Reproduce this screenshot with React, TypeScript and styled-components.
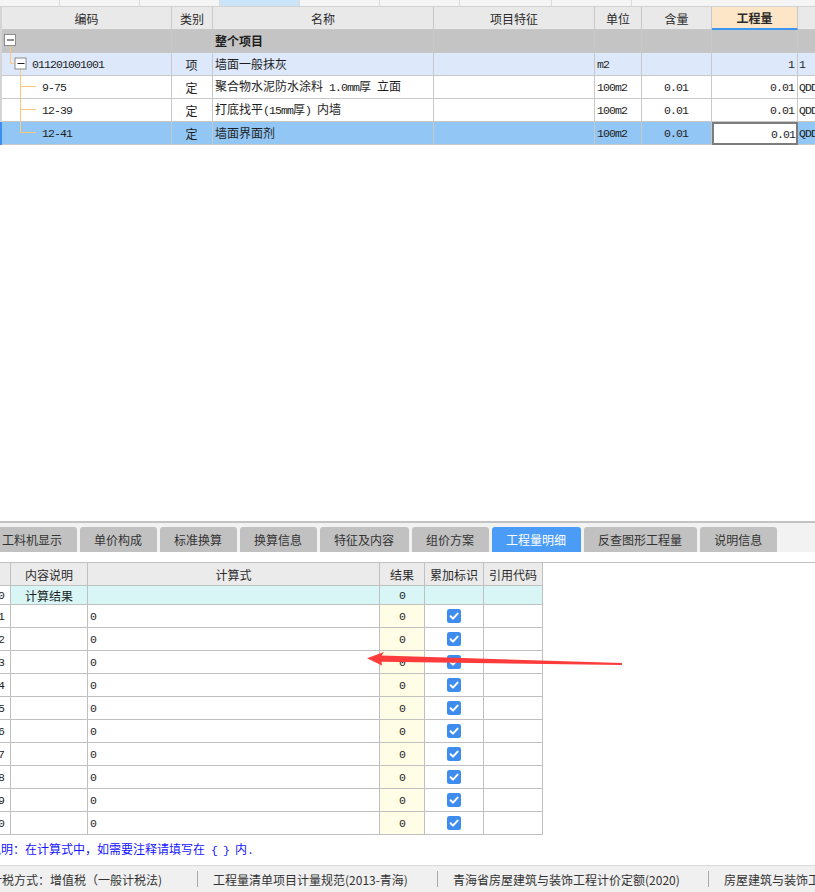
import React from "react";
import styled, { createGlobalStyle } from "styled-components";

const GlobalStyle = createGlobalStyle`
  html, body {
    margin: 0;
    padding: 0;
    background: #ffffff;
  }
  body {
    font-family: "Noto Sans CJK SC", "Microsoft YaHei", sans-serif;
    font-size: 12px;
    color: #222;
  }
`;

const ASCII = /([\x20-\x7e]+)/;

// SimSun-like half-width runs: monospace ascii inside CJK text
function Mixed({ text }: { text: string }) {
  return (
    <Text>
      {text.split(ASCII).map((part, i) =>
        i % 2 === 1 ? <Ascii key={i}>{part}</Ascii> : part ? <span key={i}>{part}</span> : null
      )}
    </Text>
  );
}

const TOP_COLS = [170, 41, 221, 161, 47, 70, 86, 60];
const LOW_COLS = [11, 77, 292, 45, 59, 59];

type Tone = "head" | "group" | "item" | "plain" | "selected";

const toneBg: Record<Tone, string> = {
  head: "#e9e9e9",
  group: "#c4c4c4",
  item: "#dde9fb",
  plain: "#ffffff",
  selected: "#92c6f4",
};

type TopRow = {
  level: 0 | 1 | 2;
  last?: boolean;
  code: string;
  kind: string;
  name: string;
  feature: string;
  unit: string;
  ratio: string;
  amount: string;
  extra: string;
  tone: Tone;
};

const topRows: TopRow[] = [
  { level: 0, code: "", kind: "", name: "整个项目", feature: "", unit: "", ratio: "", amount: "", extra: "", tone: "group" },
  { level: 1, code: "011201001001", kind: "项", name: "墙面一般抹灰", feature: "", unit: "m2", ratio: "", amount: "1", extra: "1", tone: "item" },
  { level: 2, code: "9-75", kind: "定", name: "聚合物水泥防水涂料 1.0mm厚 立面", feature: "", unit: "100m2", ratio: "0.01", amount: "0.01", extra: "QDDE", tone: "plain" },
  { level: 2, code: "12-39", kind: "定", name: "打底找平(15mm厚) 内墙", feature: "", unit: "100m2", ratio: "0.01", amount: "0.01", extra: "QDDE", tone: "plain" },
  { level: 2, last: true, code: "12-41", kind: "定", name: "墙面界面剂", feature: "", unit: "100m2", ratio: "0.01", amount: "0.01", extra: "QDDE", tone: "selected" },
];

const tabs = ["工料机显示", "单价构成", "标准换算", "换算信息", "特征及内容", "组价方案", "工程量明细", "反查图形工程量", "说明信息"];

const stripCells = [60, 80, 80, 80, 80, 80, 92, 80, 200];

const ORANGE = "#ffc878";

function MinusBox({ x, y }: { x: number; y: number }) {
  return (
    <>
      <rect x={x + 0.5} y={y + 0.5} width={11} height={11} fill="#fff" stroke="#8c8c8c" />
      <line x1={x + 3} y1={y + 6} x2={x + 10} y2={y + 6} stroke="#222" strokeWidth={1} />
    </>
  );
}

function TreeLines({ level, last }: { level: 0 | 1 | 2; last?: boolean }) {
  if (level === 0) {
    return (
      <TreeSvg width={16} height={22} viewBox="0 0 16 22">
        <line x1={8.5} y1={16} x2={8.5} y2={22} stroke={ORANGE} />
        <MinusBox x={2} y={4} />
      </TreeSvg>
    );
  }
  if (level === 1) {
    return (
      <TreeSvg width={30} height={22} viewBox="0 0 30 22">
        <line x1={8.5} y1={0} x2={8.5} y2={10.5} stroke={ORANGE} />
        <line x1={8.5} y1={10.5} x2={12.5} y2={10.5} stroke={ORANGE} />
        <line x1={18.5} y1={16} x2={18.5} y2={22} stroke={ORANGE} />
        <MinusBox x={12.5} y={4.5} />
      </TreeSvg>
    );
  }
  return (
    <TreeSvg width={40} height={22} viewBox="0 0 40 22">
      <line x1={18.5} y1={0} x2={18.5} y2={last ? 10.5 : 22} stroke={ORANGE} />
      <line x1={18.5} y1={10.5} x2={34} y2={10.5} stroke={ORANGE} />
    </TreeSvg>
  );
}

function CheckBox() {
  return (
    <svg width={14} height={14} viewBox="0 0 14 14">
      <rect x={0} y={0} width={14} height={14} rx={2.5} fill="#3d8cee" />
      <path d="M3.6 7.3 L6 9.6 L10.6 4.6" fill="none" stroke="#fff" strokeWidth={2} strokeLinecap="round" strokeLinejoin="round" />
    </svg>
  );
}

export default function App() {
  return (
    <Page>
      <GlobalStyle />

      <TopStrip>
        {stripCells.map((w, i) => (
          <StripCell key={i} $w={w} $active={i === 3} />
        ))}
      </TopStrip>

      <Grid>
        <Row $tone="head">
          <HeadCell $w={TOP_COLS[0]}>编码</HeadCell>
          <HeadCell $w={TOP_COLS[1]}>类别</HeadCell>
          <HeadCell $w={TOP_COLS[2]}>名称</HeadCell>
          <HeadCell $w={TOP_COLS[3]}>项目特征</HeadCell>
          <HeadCell $w={TOP_COLS[4]}>单位</HeadCell>
          <HeadCell $w={TOP_COLS[5]}>含量</HeadCell>
          <HeadCell $w={TOP_COLS[6]} $hot>工程量</HeadCell>
          <HeadCell $w={TOP_COLS[7]} />
        </Row>
        {topRows.map((r, i) => (
          <Row key={i} $tone={r.tone}>
            <Cell $w={TOP_COLS[0]} $pad={0}>
              <TreeLines level={r.level} last={r.last} />
              <Mixed text={r.code} />
            </Cell>
            <Cell $w={TOP_COLS[1]} $align="center">{r.kind}</Cell>
            <Cell $w={TOP_COLS[2]} $bold={r.tone === "group"}>
              <Mixed text={r.name} />
            </Cell>
            <Cell $w={TOP_COLS[3]}>{r.feature}</Cell>
            <Cell $w={TOP_COLS[4]}>
              <Mixed text={r.unit} />
            </Cell>
            <Cell $w={TOP_COLS[5]} $align="center">
              <Mixed text={r.ratio} />
            </Cell>
            <Cell $w={TOP_COLS[6]} $align="flex-end" $focus={r.tone === "selected"}>
              <Mixed text={r.amount} />
            </Cell>
            <Cell $w={TOP_COLS[7]} $pad={1}>
              <Mixed text={r.extra} />
            </Cell>
          </Row>
        ))}
      </Grid>

      <Spacer />

      <Bottom>
        <TabBar>
          {tabs.map((t) => (
            <Tab key={t} $active={t === "工程量明细"}>
              {t}
            </Tab>
          ))}
        </TabBar>

        <LowGrid>
          <LowRow>
            <LowHead $w={LOW_COLS[0]} />
            <LowHead $w={LOW_COLS[1]}>内容说明</LowHead>
            <LowHead $w={LOW_COLS[2]}>计算式</LowHead>
            <LowHead $w={LOW_COLS[3]}>结果</LowHead>
            <LowHead $w={LOW_COLS[4]}>累加标识</LowHead>
            <LowHead $w={LOW_COLS[5]}>引用代码</LowHead>
          </LowRow>
          <LowRow>
            <NumCell $h={19}>
              <Ascii>0</Ascii>
            </NumCell>
            <LowCell $w={LOW_COLS[1]} $h={19} $bg="#d8f6f6" $align="center">计算结果</LowCell>
            <LowCell $w={LOW_COLS[2]} $h={19} $bg="#d8f6f6" />
            <LowCell $w={LOW_COLS[3]} $h={19} $bg="#d8f6f6" $align="center">
              <Ascii>0</Ascii>
            </LowCell>
            <LowCell $w={LOW_COLS[4]} $h={19} $bg="#d8f6f6" />
            <LowCell $w={LOW_COLS[5]} $h={19} $bg="#d8f6f6" />
          </LowRow>
          {Array.from({ length: 10 }, (_, i) => i + 1).map((n) => (
            <LowRow key={n}>
              <NumCell $h={23}>
                <Ascii>{n}</Ascii>
              </NumCell>
              <LowCell $w={LOW_COLS[1]} $h={23} />
              <LowCell $w={LOW_COLS[2]} $h={23}>
                <Ascii>0</Ascii>
              </LowCell>
              <LowCell $w={LOW_COLS[3]} $h={23} $bg="#fffde6" $align="center">
                <Ascii>0</Ascii>
              </LowCell>
              <LowCell $w={LOW_COLS[4]} $h={23} $align="center">
                <CheckBox />
              </LowCell>
              <LowCell $w={LOW_COLS[5]} $h={23} />
            </LowRow>
          ))}
        </LowGrid>

        <Note>
          <Mixed text="说明：在计算式中，如需要注释请填写在 { } 内." />
        </Note>

        <StatusBar>
          <StatusItem $w={207} $pl={0}>计税方式：增值税（一般计税法)</StatusItem>
          <Divider />
          <StatusItem $w={239} $pl={15}>工程量清单项目计量规范(2013-青海)</StatusItem>
          <Divider />
          <StatusItem $w={270} $pl={15}>青海省房屋建筑与装饰工程计价定额(2020)</StatusItem>
          <Divider />
          <StatusItem $pl={15}>房屋建筑与装饰工程(2020)</StatusItem>
        </StatusBar>
      </Bottom>

      <Arrow width={815} height={892} viewBox="0 0 815 892">
        <polygon
          points="367,658.3 384,652 381.5,655.6 622,663 622,665 381.5,661.8 382,665.5"
          fill="#ff3b3b"
        />
      </Arrow>
    </Page>
  );
}

const Page = styled.div`
  position: relative;
  width: 815px;
  height: 892px;
  display: flex;
  flex-direction: column;
  overflow: hidden;
  background: #fff;
`;

const Text = styled.span`
  white-space: pre;
  line-height: 16px;
`;

const Ascii = styled.span`
  font-family: "Liberation Mono", "DejaVu Sans Mono", monospace;
  font-size: 11.5px;
  letter-spacing: -0.9px;
  white-space: pre;
`;

const TopStrip = styled.div`
  display: flex;
  height: 7px;
  flex: none;
  border-bottom: 1px solid #d2d2d2;
  box-sizing: border-box;
  background: #f5f5f5;
`;

const StripCell = styled.div<{ $w: number; $active?: boolean }>`
  flex: none;
  width: ${(p) => p.$w}px;
  box-sizing: border-box;
  border-right: 1px solid #dcdcdc;
  background: ${(p) => (p.$active ? "#cce4f7" : "transparent")};
`;

const Grid = styled.div`
  flex: none;
  display: flex;
  flex-direction: column;
`;

const Row = styled.div<{ $tone: Tone }>`
  display: flex;
  height: 23px;
  background: ${(p) => toneBg[p.$tone]};
  border-left: 2px solid ${(p) => (p.$tone === "selected" ? "#3b8fef" : "#d4d4d4")};
`;

const HeadCell = styled.div<{ $w: number; $hot?: boolean }>`
  flex: none;
  width: ${(p) => p.$w}px;
  box-sizing: border-box;
  display: flex;
  align-items: center;
  justify-content: center;
  border-right: 1px solid #c8c8c8;
  border-bottom: ${(p) => (p.$hot ? "2px solid #3c96f0" : "1px solid #c8c8c8")};
  background: ${(p) => (p.$hot ? "#fde5c8" : "transparent")};
  font-size: 12px;
  font-weight: ${(p) => (p.$hot ? 700 : 400)};
  color: #2a2a2a;
`;

const Cell = styled.div<{
  $w: number;
  $align?: string;
  $pad?: number;
  $bold?: boolean;
  $focus?: boolean;
}>`
  flex: none;
  width: ${(p) => p.$w}px;
  box-sizing: border-box;
  display: flex;
  align-items: center;
  justify-content: ${(p) => p.$align ?? "flex-start"};
  padding: 0 ${(p) => (p.$focus ? 1 : 3)}px 0 ${(p) => p.$pad ?? 2}px;
  border-right: 1px solid #c8c8c8;
  border-bottom: 1px solid #c8c8c8;
  ${(p) => p.$focus && "border: 2px solid #7c7c7c; background: #ffffff;"}
  overflow: hidden;
  white-space: nowrap;
  font-size: 12px;
  font-weight: ${(p) => (p.$bold ? 700 : 400)};
  color: #1e1e1e;
`;

const TreeSvg = styled.svg`
  flex: none;
  display: block;
  align-self: flex-start;
`;

const Spacer = styled.div`
  flex: 1;
  background: #fff;
`;

const Bottom = styled.div`
  flex: none;
  display: flex;
  flex-direction: column;
  border-top: 2px solid #c2c2c2;
`;

const TabBar = styled.div`
  display: flex;
  gap: 3px;
  height: 29px;
  box-sizing: border-box;
  padding-top: 4px;
  margin-left: -12px;
  background: #f2f2f2;
`;

const Tab = styled.div<{ $active?: boolean }>`
  flex: none;
  height: 25px;
  box-sizing: border-box;
  padding: 0 15px 0 14px;
  display: flex;
  align-items: center;
  border-radius: 3px 3px 0 0;
  background: ${(p) => (p.$active ? "#4a9cf7" : "#c1c1c1")};
  color: ${(p) => (p.$active ? "#ffffff" : "#333333")};
  font-size: 12px;
  white-space: nowrap;
`;

const LowGrid = styled.div`
  margin-top: 10px;
  display: flex;
  flex-direction: column;
  border-top: 1px solid #c0c0c0;
`;

const LowRow = styled.div`
  display: flex;
`;

const LowHead = styled.div<{ $w: number }>`
  flex: none;
  width: ${(p) => p.$w}px;
  height: 23px;
  box-sizing: border-box;
  display: flex;
  align-items: center;
  justify-content: center;
  border-right: 1px solid #c0c0c0;
  border-bottom: 1px solid #c0c0c0;
  background: #ebebeb;
  font-size: 12px;
  color: #2a2a2a;
  white-space: nowrap;
  overflow: hidden;
`;

const LowCell = styled.div<{ $w: number; $h: number; $bg?: string; $align?: string }>`
  flex: none;
  width: ${(p) => p.$w}px;
  height: ${(p) => p.$h}px;
  box-sizing: border-box;
  display: flex;
  align-items: center;
  justify-content: ${(p) => p.$align ?? "flex-start"};
  padding-left: ${(p) => (p.$align ? 0 : 2)}px;
  border-right: 1px solid #c0c0c0;
  border-bottom: 1px solid #c0c0c0;
  background: ${(p) => p.$bg ?? "#ffffff"};
  font-size: 12px;
  color: #1e1e1e;
  white-space: nowrap;
  overflow: hidden;
`;

const NumCell = styled.div<{ $h: number }>`
  flex: none;
  width: 11px;
  height: ${(p) => p.$h}px;
  box-sizing: border-box;
  display: flex;
  align-items: center;
  justify-content: flex-end;
  padding-right: 6px;
  border-right: 1px solid #c0c0c0;
  border-bottom: 1px solid #c0c0c0;
  overflow: hidden;
  color: #1e1e1e;
`;

const Note = styled.div`
  height: 30px;
  display: flex;
  align-items: center;
  margin-left: -11px;
  color: #1414ff;
  font-size: 12px;
  white-space: nowrap;
`;

const StatusBar = styled.div`
  height: 27px;
  box-sizing: border-box;
  display: flex;
  align-items: center;
  margin-left: -10px;
  border-top: 1px solid #dadada;
  background: #f0f0f0;
  font-size: 12px;
  color: #333;
  white-space: nowrap;
`;

const StatusItem = styled.div<{ $w?: number; $pl: number }>`
  flex: none;
  ${(p) => (p.$w ? `width: ${p.$w}px;` : "")}
  box-sizing: border-box;
  padding-left: ${(p) => p.$pl}px;
  overflow: hidden;
`;

const Divider = styled.div`
  flex: none;
  width: 1px;
  height: 16px;
  background: #a8a8a8;
`;

const Arrow = styled.svg`
  position: absolute;
  left: 0;
  top: 0;
  pointer-events: none;
`;
